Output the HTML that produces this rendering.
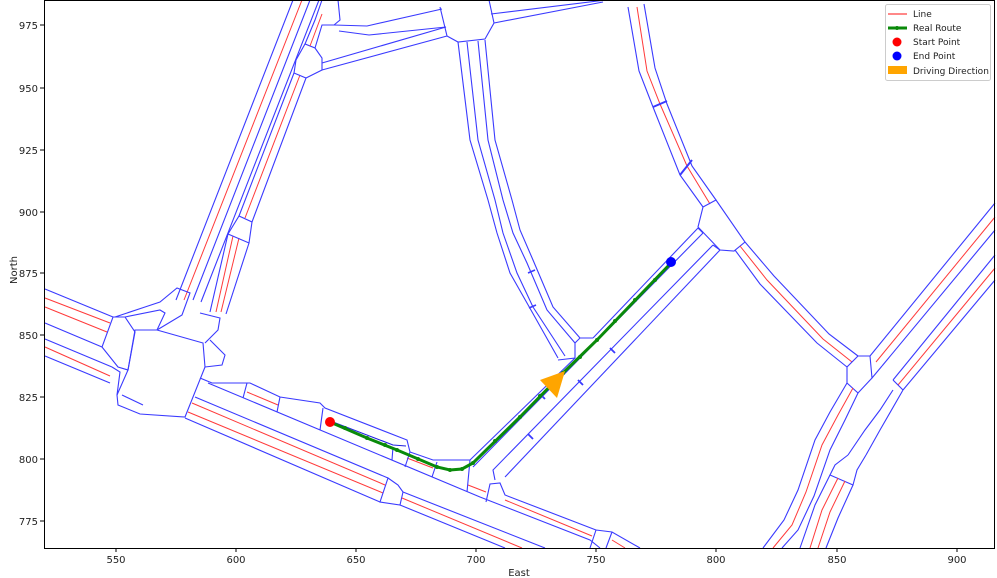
<!DOCTYPE html>
<html><head><meta charset="utf-8"><style>
body{margin:0;background:#fff;}
svg{display:block;font-family:"DejaVu Sans","Liberation Sans",sans-serif;}
.b{fill:none;stroke:#3a3aff;stroke-width:1.1;}
.r{fill:none;stroke:#ff3a3a;stroke-width:1;}
.t{font-size:10px;fill:#222;}
</style></head><body>
<svg width="997" height="578" viewBox="0 0 997 578">
<rect width="997" height="578" fill="#fff"/>
<g>
<path class="b" d="M176,300 L293,0"/><path class="r" d="M184,300 L302,0"/><path class="b" d="M193,300 L310,0"/><path class="b" d="M201,302 L319,0"/>
<path class="b" d="M210,312 L228,234"/><path class="r" d="M216,312 L233,236"/><path class="r" d="M221,312 L239,238"/><path class="b" d="M226,314 L249,243"/>
<path class="b" d="M228,234 L249,243 L252,222 L239,216 Z"/>
<path class="b" d="M239,216 L294,73"/><path class="r" d="M245,218 L300,75"/><path class="b" d="M252,222 L306,78"/>
<path class="b" d="M294,73 L306,78 L322,70 L322,58 L315,48 L305,44 L296,60 Z"/>
<path class="b" d="M305,44 L315,20 L322,0"/><path class="r" d="M310,46 L322,14"/><path class="b" d="M315,48 L322,25 L334,25 L340,20 L338,0"/>
<path class="b" d="M322,63 L446,27"/><path class="b" d="M322,70 L447,36"/>
<path class="b" d="M334,25 L367,26 L442,9"/><path class="b" d="M339,31 L369,35 L446,27"/>
<path class="b" d="M440,7 L447,36 L458,42 L485,39 L494,23 L489,0"/>
<path class="b" d="M491,14 L606,0"/><path class="b" d="M494,23 L603,2"/>
<path class="b" d="M458,42 L470,140 L488,200 L497,233 L510,273 L527,303 L558,358"/>
<path class="b" d="M467,42 L478,140 L495,200 L503,233 L517,273 L533,307 L565,356"/>
<path class="b" d="M478,41 L488,140 L503,200 L513,233 L527,263 L547,310 L575,343"/>
<path class="b" d="M485,40 L495,140 L512,200 L520,230 L533,260 L553,307 L580,338"/>
<path class="b" d="M528,273 L535,270 M529,308 L536,305" style="stroke-width:1.6"/>
<path class="b" d="M558,360 L575,358 L575,343 L580,338 L593,338"/>
<path class="b" d="M628,7 L639,71 L653,107 L680,175 L703,207"/>
<path class="r" d="M637,7 L647,71 L660,104 L687,166 L710,204"/>
<path class="b" d="M644,4 L655,68 L667,104 L692,166 L716,200"/>
<path class="b" d="M653,107 L667,101 M680,175 L692,160" style="stroke-width:2"/>
<path class="b" d="M716,200 L703,207 L698,227 L720,250 L734,251 L745,242 Z"/>
<path class="b" d="M745,242 L774,276 L829,334 L858,356"/>
<path class="r" d="M740,246 L767,280 L823,339 L852,362"/>
<path class="b" d="M735,250 L760,284 L817,343 L847,367"/>
<path class="b" d="M858,356 L847,367 L847,383 L858,393 L872,378 L870,356 Z"/>
<path class="b" d="M870,356 L995,203"/><path class="r" d="M876,362 L995,217"/><path class="b" d="M882,366 L995,230"/>
<path class="b" d="M893,380 L995,255"/><path class="r" d="M898,385 L995,268"/><path class="b" d="M903,390 L995,280"/>
<path class="b" d="M893,380 L903,390 M882,366 L872,378"/>
<path class="b" d="M847,383 L830,412 L815,440 L798,490 L784,520 L763,548"/>
<path class="r" d="M853,388 L838,415 L822,445 L806,492 L792,525 L773,548"/>
<path class="b" d="M858,393 L845,420 L830,450 L814,496 L798,530 L782,548"/>
<path class="b" d="M893,390 L880,410 L865,430 L848,455 M848,455 L835,465 L830,475 L853,485 L857,470 L866,455"/>
<path class="b" d="M830,475 L815,505 L800,548"/><path class="r" d="M838,478 L822,510 L810,548"/><path class="r" d="M845,481 L830,512 L818,548"/><path class="b" d="M853,485 L838,518 L826,548"/>
<path class="b" d="M903,390 L880,430 L866,455"/>
<path class="b" d="M698,228 L593,338"/>
<path class="b" d="M575,358 L470,460"/>
<path class="b" d="M703,233 L473,467"/>
<path class="b" d="M713,245 L493,470 L495,480"/>
<path class="b" d="M720,250 L505,477"/>
<path class="b" d="M698,228 L703,233 M713,245 L720,250"/>
<path class="b" d="M540,394 L545,399 M578,380 L583,385 M610,348 L615,353 M528,434 L533,439" style="stroke-width:1.8"/>
<path class="b" d="M157,330 L203,343 L205,367 L185,417 L140,414 L118,405 L117,395 L128,370 L135,330 Z"/>
<path class="b" d="M45,289 L113,317"/><path class="r" d="M45,298 L110,323"/><path class="r" d="M45,307 L107,332"/><path class="b" d="M45,323 L102,347"/>
<path class="b" d="M45,339 L112,367"/><path class="r" d="M45,347 L110,376"/><path class="b" d="M45,356 L110,383"/>
<path class="b" d="M113,317 L125,317 L135,332 L128,370 L118,367 L102,347 Z"/>
<path class="b" d="M115,317 L145,307 L160,302 L177,288 L190,293 L182,315 L157,330"/>
<path class="b" d="M125,317 L160,310 L165,313 L157,330"/>
<path class="b" d="M200,313 L220,318 L218,330 L205,343"/>
<path class="b" d="M210,340 L225,355 L222,365 L205,367"/>
<path class="b" d="M112,367 L120,372 L117,395 M122,395 L143,405" />
<path class="b" d="M185,418 L380,502"/><path class="r" d="M188,412 L383,493"/><path class="r" d="M192,403 L385,485"/><path class="b" d="M195,397 L388,478"/>
<path class="b" d="M388,478 L398,485 L403,492 L400,505 L380,502 Z"/>
<path class="b" d="M400,505 L505,548"/><path class="r" d="M402,498 L522,548"/><path class="b" d="M403,492 L545,548"/>
<path class="b" d="M208,383 L480,497 L590,540 L600,548"/>
<path class="b" d="M200,378 L212,383 L250,383 L280,397 L320,403 L325,408 L407,440 L410,452 L433,460 L470,460"/>
<path class="r" d="M247,392 L278,405"/><path class="r" d="M407,458 L433,468"/><path class="r" d="M468,485 L486,492"/>
<path class="b" d="M333,422 L393,445 L406,446" style="stroke:#2020e0"/>
<path class="b" d="M247,383 L243,398 M280,397 L277,412 M323,408 L320,430 M393,447 L392,460 M410,452 L405,467 M437,462 L432,477 M470,460 L467,492"/>
<path class="b" d="M486,502 L490,484 L500,483 L505,495 L596,530"/>
<path class="r" d="M505,500 L592,536"/>
<path class="b" d="M596,530 L590,548 M612,532 L606,548 M596,530 L612,532 L640,548"/>
<path class="r" d="M612,540 L625,548"/>
</g>
<polyline points="330,422 367,438 397,450 437,467 450,470 462,469 473,463 520,417 563,373 597,340 671,263" fill="none" stroke="#0a8a0a" stroke-width="3"/>
<g fill="#0a8a0a">
<circle cx="345" cy="428" r="2"/><circle cx="367" cy="438" r="2"/><circle cx="385" cy="445" r="2"/><circle cx="397" cy="450" r="2"/><circle cx="418" cy="459" r="2"/><circle cx="437" cy="467" r="2"/><circle cx="450" cy="470" r="2"/><circle cx="462" cy="469" r="2"/><circle cx="473" cy="463" r="2"/><circle cx="495" cy="441" r="2"/><circle cx="520" cy="417" r="2"/><circle cx="540" cy="396" r="2"/><circle cx="563" cy="373" r="2"/><circle cx="580" cy="357" r="2"/><circle cx="597" cy="340" r="2"/><circle cx="615" cy="321" r="2"/><circle cx="635" cy="300" r="2"/><circle cx="655" cy="280" r="2"/>
</g>
<polygon points="540,380 565,371 557,398" fill="#ffa500"/>
<circle cx="330" cy="422" r="5" fill="#ff0000"/>
<circle cx="671" cy="262" r="5" fill="#0000ff"/>
<rect x="44.5" y="0.5" width="950" height="548" fill="none" stroke="#000" stroke-width="1"/>
<g stroke="#000">
<line x1="116" y1="548" x2="116" y2="552"/><line x1="236" y1="548" x2="236" y2="552"/><line x1="356" y1="548" x2="356" y2="552"/><line x1="476" y1="548" x2="476" y2="552"/><line x1="596" y1="548" x2="596" y2="552"/><line x1="716" y1="548" x2="716" y2="552"/><line x1="837" y1="548" x2="837" y2="552"/><line x1="957" y1="548" x2="957" y2="552"/>
<line x1="40" y1="25" x2="44" y2="25"/><line x1="40" y1="88" x2="44" y2="88"/><line x1="40" y1="150" x2="44" y2="150"/><line x1="40" y1="212" x2="44" y2="212"/><line x1="40" y1="273" x2="44" y2="273"/><line x1="40" y1="335" x2="44" y2="335"/><line x1="40" y1="397" x2="44" y2="397"/><line x1="40" y1="459" x2="44" y2="459"/><line x1="40" y1="521" x2="44" y2="521"/>
</g>
<g class="t" text-anchor="middle">
<text x="116" y="563">550</text><text x="236" y="563">600</text><text x="356" y="563">650</text><text x="476" y="563">700</text><text x="596" y="563">750</text><text x="716" y="563">800</text><text x="837" y="563">850</text><text x="957" y="563">900</text>
<text x="519" y="576">East</text>
</g>
<g class="t" text-anchor="end">
<text x="38" y="29">975</text><text x="38" y="92">950</text><text x="38" y="154">925</text><text x="38" y="216">900</text><text x="38" y="277">875</text><text x="38" y="339">850</text><text x="38" y="401">825</text><text x="38" y="463">800</text><text x="38" y="525">775</text>
</g>
<text class="t" transform="translate(17,270) rotate(-90)" text-anchor="middle">North</text>
<rect x="885.5" y="4.5" width="105" height="76" rx="2" fill="#fff" stroke="#ccc"/>
<line x1="888" y1="14" x2="907" y2="14" stroke="#ff6060" stroke-width="1.5"/>
<line x1="888" y1="28" x2="907" y2="28" stroke="#0a8a0a" stroke-width="3"/><circle cx="897" cy="28" r="2" fill="#0a8a0a"/>
<circle cx="897" cy="42" r="4.5" fill="#f00"/>
<circle cx="897" cy="56" r="4.5" fill="#00f"/>
<rect x="888" y="66" width="19" height="8" fill="#ffa500"/>
<g class="t" style="font-size:9px">
<text x="913" y="17">Line</text><text x="913" y="31">Real Route</text><text x="913" y="45">Start Point</text><text x="913" y="59">End Point</text><text x="913" y="74">Driving Direction</text>
</g>
</svg>
</body></html>
